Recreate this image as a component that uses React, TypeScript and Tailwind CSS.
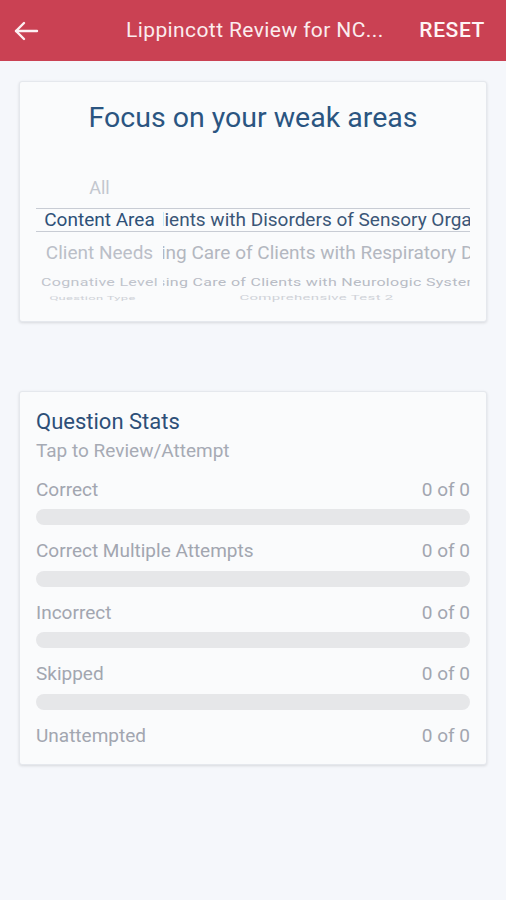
import React from "react";

const stats = [
  { label: "Correct", value: "0 of 0", bar: true },
  { label: "Correct Multiple Attempts", value: "0 of 0", bar: true },
  { label: "Incorrect", value: "0 of 0", bar: true },
  { label: "Skipped", value: "0 of 0", bar: true },
  { label: "Unattempted", value: "0 of 0", bar: false },
];

export default function App() {
  return (
    <div
      className="w-[506px] h-[900px] bg-[#f5f7fb] overflow-hidden"
      style={{ fontFamily: "Roboto, 'Noto Sans', Arial, sans-serif" }}
    >
      {/* Header */}
      <div className="h-[61px] bg-[#ca4153] flex items-center text-white">
        <div className="w-[64px] pl-[13px] flex items-center">
          <svg width="26" height="24" viewBox="0 0 26 24" fill="none" stroke="#fdf0f2" strokeWidth="2.4" strokeLinecap="round" strokeLinejoin="round">
            <path d="M24 12H3" />
            <path d="M11 4L3 12L11 20" />
          </svg>
        </div>
        <div className="flex-1 pl-[62px] text-[21px] tracking-[0.4px] text-[#fbecee] whitespace-nowrap">Lippincott Review for NC...</div>
        <div className="pr-[21px] text-[21px] font-medium text-[#fff4f5] tracking-[0.6px]">RESET</div>
      </div>

      {/* Focus card */}
      <div className="mx-[19px] mt-[20px] h-[241px] bg-[#fafbfc] border border-[#e5e8ed] rounded-[3px] shadow-[0_1px_3px_rgba(0,0,0,0.12)] px-[16px] overflow-hidden">
        <div className="pt-[19px] text-center text-[28.5px] leading-[34px] text-[#2a5581]">Focus on your weak areas</div>
        <div className="mt-[35px]">
          {/* Row: All */}
          <div className="h-[34px] flex items-center">
            <div className="w-[127px] text-center text-[18px] text-[#c3c7cf]">All</div>
            <div className="flex-1" />
          </div>
          {/* Selected row */}
          <div className="mt-[4px] h-[24px] border-y border-[#c8ccd4] flex items-center">
            <div className="w-[127px] shrink-0 text-center text-[19px] text-[#2d5078] whitespace-nowrap">Content Area</div>
            <div className="flex-1 overflow-hidden flex justify-end whitespace-nowrap text-[19px] text-[#3a5677]">
              <span className="mr-[-22px]">Nursing Care of Clients with Disorders of Sensory Organs</span>
            </div>
          </div>
          {/* Client Needs */}
          <div className="h-[42px] flex items-center">
            <div className="w-[127px] shrink-0 text-center text-[19px] text-[#bbbfc8] whitespace-nowrap scale-y-[0.92]">Client Needs</div>
            <div className="flex-1 overflow-hidden flex justify-end whitespace-nowrap text-[19px] text-[#b3b7c0] scale-y-[0.92]">
              <span className="mr-[-72px]">Nursing Care of Clients with Respiratory Disorders</span>
            </div>
          </div>
          {/* Cognative Level */}
          <div className="h-[16px] flex items-center">
            <div className="w-[127px] shrink-0 text-center text-[16px] text-[#c0c4cc] whitespace-nowrap scale-y-[0.72] tracking-[0.3px]">Cognative Level</div>
            <div className="flex-1 overflow-hidden flex justify-end whitespace-nowrap text-[16px] text-[#b8bcc5] scale-y-[0.72] tracking-[0.3px]">
              <span className="mr-[-86px]">Nursing Care of Clients with Neurologic System Disorders</span>
            </div>
          </div>
          {/* Question Type */}
          <div className="h-[16px] flex items-center">
            <div className="w-[127px] shrink-0 pr-[14px] text-center text-[13px] text-[#cfd2d8] whitespace-nowrap scale-y-[0.45] tracking-[0.3px]">Question Type</div>
            <div className="flex-1 flex justify-center whitespace-nowrap text-[15px] text-[#cfd2d8] scale-y-[0.45] tracking-[0.3px]">
              <span>Comprehensive Test 2</span>
            </div>
          </div>
        </div>
      </div>

      {/* Stats card */}
      <div className="mx-[19px] mt-[69px] bg-[#fafbfc] border border-[#e5e8ed] rounded-[3px] shadow-[0_1px_3px_rgba(0,0,0,0.12)] px-[16px] pt-[18px] pb-[16px]">
        <div className="text-[22px] leading-[24px] text-[#2d4f78]">Question Stats</div>
        <div className="mt-[5px] text-[19px] leading-[24px] text-[#a6aab4]">Tap to Review/Attempt</div>
        <div className="mt-[15px] flex flex-col gap-[14.5px]">
          {stats.map((s) => (
            <div key={s.label}>
              <div className="h-[24px] flex items-center justify-between text-[19px] text-[#a2a6b0]">
                <span>{s.label}</span>
                <span>{s.value}</span>
              </div>
              {s.bar && <div className="mt-[7px] h-[16px] rounded-full bg-[#e6e7e9]" />}
            </div>
          ))}
        </div>
      </div>
    </div>
  );
}
